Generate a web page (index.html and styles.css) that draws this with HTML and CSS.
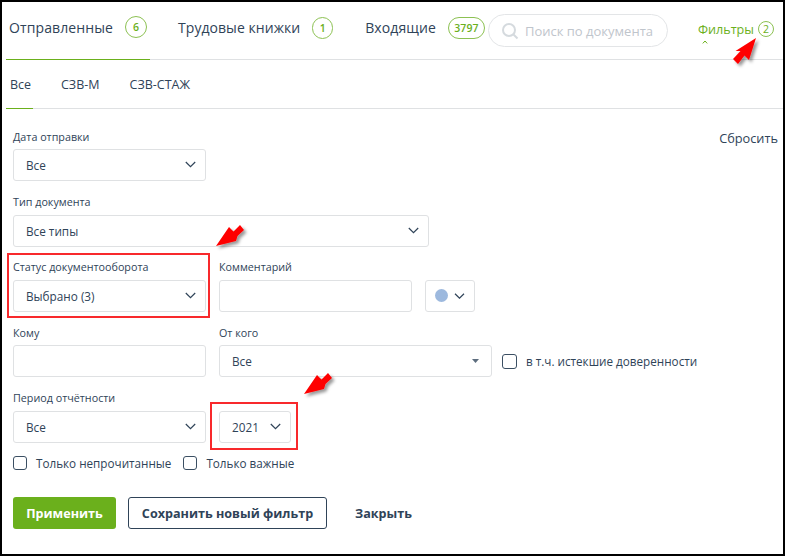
FILE: index.html
```html
<!DOCTYPE html>
<html lang="ru">
<head>
<meta charset="utf-8">
<title>Фильтры</title>
<link rel="stylesheet" href="styles.css">
</head>
<body>
<div class="frame">
  <header class="tabs">
    <div class="tab tab-active">Отправленные<span class="count">6</span></div>
    <div class="tab tab-second">Трудовые книжки<span class="count">1</span></div>
    <div class="tab tab-third">Входящие<span class="count count-wide">3797</span></div>
    <div class="search">
      <svg class="search-icon" width="18" height="18" viewBox="0 0 18 18"><circle cx="8" cy="8" r="6" fill="none" stroke="#d5dade" stroke-width="2"/><path d="M12.5 12.5 16.5 16.5" stroke="#d5dade" stroke-width="2"/></svg>
      <span>Поиск по документа</span>
    </div>
    <div class="filters">
      <span class="filters-label">Фильтры<svg class="caret-up" width="6" height="4" viewBox="0 0 6 4"><path d="M.8 3.4 3 1l2.2 2.4" fill="none" stroke="#6bb01c"/></svg></span>
      <span class="filters-count">2</span>
    </div>
  </header>

  <nav class="subtabs">
    <div class="subtab subtab-active">Все</div>
    <div class="subtab">СЗВ-М</div>
    <div class="subtab">СЗВ-СТАЖ</div>
  </nav>

  <main class="form">
    <a class="reset">Сбросить</a>

    <div class="row">
      <div class="field w-193">
        <label>Дата отправки</label>
        <div class="control">Все<svg class="chev" width="11" height="7" viewBox="0 0 11 7"><path d="M.8 1l4.700 4.700L10.200 1" fill="none" stroke="#2f4358" stroke-width="1.2"/></svg></div>
      </div>
    </div>

    <div class="row">
      <div class="field w-416">
        <label>Тип документа</label>
        <div class="control">Все типы<svg class="chev" width="11" height="7" viewBox="0 0 11 7"><path d="M.8 1l4.700 4.700L10.200 1" fill="none" stroke="#2f4358" stroke-width="1.2"/></svg></div>
      </div>
    </div>

    <div class="row">
      <div class="field w-193">
        <label>Статус документооборота</label>
        <div class="control">Выбрано (3)<svg class="chev" width="11" height="7" viewBox="0 0 11 7"><path d="M.8 1l4.700 4.700L10.200 1" fill="none" stroke="#2f4358" stroke-width="1.2"/></svg></div>
      </div>
      <div class="field w-193">
        <label>Комментарий</label>
        <div class="control"></div>
      </div>
      <div class="field color-field">
        <label>&nbsp;</label>
        <div class="control color-control"><span class="dot"></span><svg width="11" height="6" viewBox="0 0 11 6"><path d="M1 .8l4.500 4.400L10 .8" fill="none" stroke="#2f4358" stroke-width="1.2"/></svg></div>
      </div>
    </div>

    <div class="row">
      <div class="field w-193">
        <label>Кому</label>
        <div class="control"></div>
      </div>
      <div class="field w-273">
        <label>От кого</label>
        <div class="control">Все<svg class="tri" width="7" height="4" viewBox="0 0 7 4"><path d="M0 0h7L3.500 4z" fill="#5d6d7e"/></svg></div>
      </div>
      <div class="check check-inline"><span class="box"></span>в т.ч. истекшие доверенности</div>
    </div>

    <div class="row">
      <div class="field w-193">
        <label>Период отчётности</label>
        <div class="control">Все<svg class="chev" width="11" height="7" viewBox="0 0 11 7"><path d="M.8 1l4.700 4.700L10.200 1" fill="none" stroke="#2f4358" stroke-width="1.2"/></svg></div>
      </div>
      <div class="field w-72">
        <label>&nbsp;</label>
        <div class="control">2021<svg class="chev" width="11" height="7" viewBox="0 0 11 7"><path d="M.8 1l4.700 4.700L10.200 1" fill="none" stroke="#2f4358" stroke-width="1.2"/></svg></div>
      </div>
    </div>

    <div class="checks">
      <div class="check"><span class="box"></span>Только непрочитанные</div>
      <div class="check"><span class="box"></span>Только важные</div>
    </div>

    <div class="actions">
      <button class="btn btn-primary">Применить</button>
      <button class="btn btn-outline">Сохранить новый фильтр</button>
      <button class="btn btn-link">Закрыть</button>
    </div>
  </main>

  <div class="mark mark-status"></div>
  <div class="mark mark-year"></div>

  <svg class="arrows" width="785" height="556" viewBox="0 0 785 556">
    <defs>
      <filter id="sh" x="-30%" y="-30%" width="170%" height="170%"><feDropShadow dx="2.500" dy="2.500" stdDeviation="1.500" flood-color="#000" flood-opacity=".4"/></filter>
    </defs>
    <g fill="#fe0000" filter="url(#sh)">
      <path d="M756 38 749 60 744.500 55.500 738 64 733 59 740.500 51 735.500 51z"/>
      <path d="M216 246 229 227 233.500 231.500 240 225 244 230 237.500 236 236 241z"/>
      <path d="M304 394 317 375 321.500 379.500 328 373 332 378 325.500 384 324 389z"/>
    </g>
  </svg>
</div>
</body>
</html>
```
FILE: styles.css
```css
* { box-sizing: border-box; }
html, body { margin: 0; padding: 0; }
body {
  width: 785px;
  height: 556px;
  overflow: hidden;
  background: #fff;
  color: #2f4358;
  font-family: "Open Sans", sans-serif;
}
.frame {
  position: relative;
  width: 785px;
  height: 556px;
  border: 2px solid #000;
  background: #fff;
}
.tabs {
  display: flex;
  align-items: flex-start;
  height: 58px;
  margin-left: 4px;
  border-bottom: 1px solid #dfe1e3;
  position: relative;
}
.tab {
  display: flex;
  align-items: center;
  height: 58px;
  padding: 0 0 7px 3px;
  font-size: 14px;
  letter-spacing: .1px;
}
.tab-active {
  width: 144px;
  border-bottom: 1px solid #6bb01c;
}
.tab-second { margin-left: 27px; padding-left: 1px; letter-spacing: .05px; }
.tab-third { margin-left: 32px; padding-left: 0; }
.count {
  display: inline-flex;
  align-items: center;
  justify-content: center;
  width: 22px;
  height: 22px;
  margin-left: 12px;
  border: 1px solid #8cc152;
  border-radius: 11px;
  color: #6bb01c;
  font-size: 10.500px;
  font-weight: 600;
}
.tab-second .count { width: 21px; }
.count-wide { width: 37px; }
.search {
  display: flex;
  align-items: center;
  width: 180px;
  height: 33px;
  margin: 12px 0 0 3px;
  padding-left: 12px;
  border: 1px solid #e3e5e7;
  border-radius: 17px;
  color: #bfc5cc;
  font-size: 13px;
}
.search-icon { margin-right: 6px; flex: none; }
.filters {
  display: flex;
  align-items: flex-start;
  margin: 19px 0 0 auto;
  padding-right: 9px;
  color: #6bb01c;
  font-size: 12.600px;
}
.filters-label { position: relative; line-height: 18px; }
.caret-up { position: absolute; left: 4px; top: 19px; }
.filters-count {
  display: flex;
  align-items: center;
  justify-content: center;
  width: 16px;
  height: 16px;
  margin-left: 4px;
  border: 1px solid #8cc152;
  border-radius: 50%;
  font-size: 10.500px;
}
.subtabs {
  display: flex;
  height: 49px;
  margin-left: 4px;
  border-bottom: 1px solid #dfe1e3;
  font-size: 12.500px;
}
.subtab {
  display: flex;
  align-items: center;
  height: 49px;
  padding: 0 0 0 4px;
  margin-right: 26px;
}
.subtab-active {
  width: 27px;
  margin-right: 24px;
  border-bottom: 1px solid #6bb01c;
}
.form {
  position: relative;
  padding: 20.700px 0 0 11px;
}
.reset {
  position: absolute;
  top: 20px;
  right: 5px;
  font-size: 12.750px;
}
.row {
  display: flex;
  gap: 13px;
  align-items: flex-end;
  margin-bottom: 13.900px;
  height: 51.500px;
}
.field { display: flex; flex-direction: column; flex: none; }
.field label {
  display: block;
  height: 19.500px;
  font-size: 10.750px;
  line-height: 15px;
}
.w-193 { width: 193px; }
.w-416 { width: 416px; }
.w-273 { width: 273px; }
.w-72 { width: 72px; }
.color-field { width: 50px; }
.control {
  display: flex;
  align-items: center;
  justify-content: space-between;
  height: 32px;
  padding: 0 9px 0 12px;
  border: 1px solid #dfe1e3;
  border-radius: 3px;
  font-size: 11.750px;
  background: #fff;
}
.chev { flex: none; margin-top: -1px; }
.tri { flex: none; margin-right: 3px; }
.color-control { padding: 0 9px 0 9px; }
.dot { width: 13px; height: 13px; border-radius: 50%; background: #9db9de; }
.checks { display: flex; gap: 12px; margin-top: -.5px; }
.check {
  display: flex;
  align-items: center;
  font-size: 11.700px;
  line-height: 14px;
}
.check-inline { align-self: center; margin: 19px 0 0 -3px; }
.check-inline .box { width: 15px; height: 15px; }
.box {
  flex: none;
  width: 14px;
  height: 14px;
  margin-right: 9px;
  border: 1px solid #3b4f63;
  border-radius: 3px;
}
.actions { display: flex; align-items: center; gap: 12px; margin-top: 27px; }
.btn {
  height: 32px;
  border-radius: 3px;
  font-family: "Open Sans", sans-serif;
  font-size: 12.600px;
  font-weight: 700;
  padding: 0;
}
.btn-primary { width: 103px; border: 0; background: #6bb01c; color: #fff; }
.btn-outline { width: 199px; border: 1px solid #2f4358; background: #fff; color: #2f4358; }
.btn-link { margin-left: 16px; border: 0; background: none; color: #2f4358; }
.mark { position: absolute; border: 2px solid #f8292c; }
.mark-status { left: 5px; top: 251px; width: 203px; height: 65px; }
.mark-year { left: 208px; top: 400px; width: 88px; height: 48px; }
.arrows { position: absolute; left: -2px; top: -2px; pointer-events: none; }
```
